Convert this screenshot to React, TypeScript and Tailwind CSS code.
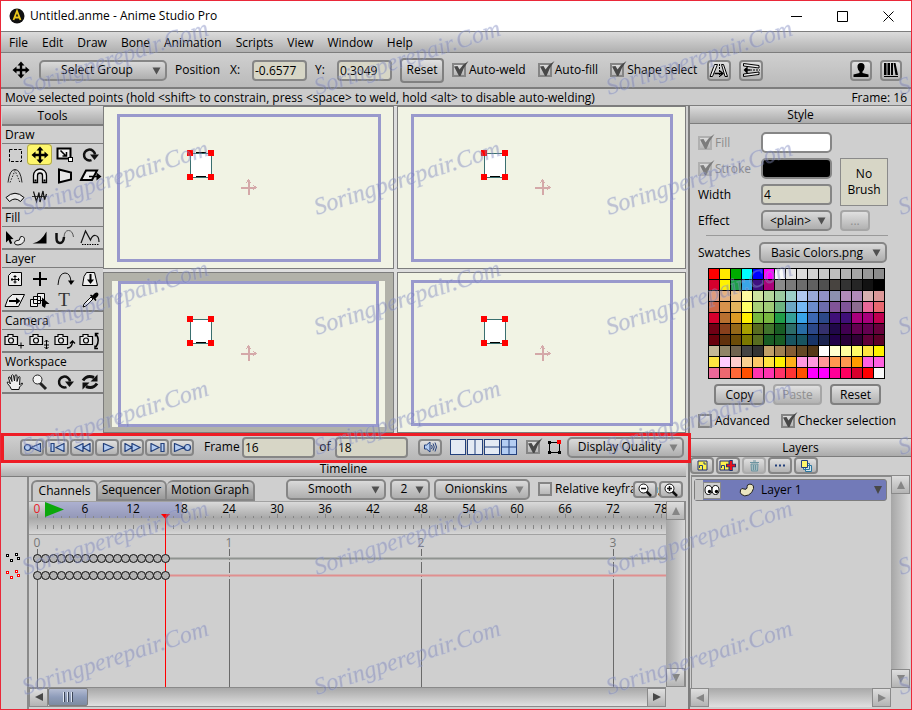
import React from "react";

/* ---------- shared controls ---------- */

type SelectProps = { label: string; value: string; className: string; dim?: boolean };

function Select({ label, value, className, dim }: SelectProps) {
  return (
    <div className={`relative shrink-0 ${className}`}>
      <select
        aria-label={label}
        className="h-[21px] w-full appearance-none rounded-[5px] border-2 border-[#868686] bg-linear-to-b from-[#dadada] to-[#aeaeae] pr-4 pl-1 text-center leading-4 outline-none"
      >
        <option>{value}</option>
      </select>
      <svg className="pointer-events-none absolute top-[7px] right-[6px]" width="9" height="8" viewBox="0 0 9 8">
        <path d="M0.5 0.5h8L4.5 7.5z" fill={dim ? "#808080" : "#505050"} />
      </svg>
    </div>
  );
}

type CheckProps = { label: string; checked?: boolean; hideLabel?: boolean; disabled?: boolean };

function Check({ label, checked, hideLabel, disabled }: CheckProps) {
  return (
    <label className={`relative flex shrink-0 items-center gap-[3px] whitespace-nowrap ${disabled ? "text-[#8c8c8c]" : ""}`}>
      <input
        type="checkbox"
        aria-label={label}
        defaultChecked={checked}
        disabled={disabled}
        className="peer size-[14px] shrink-0 appearance-none border-2 border-[#858585] bg-linear-to-b from-[#dcdcdc] to-[#b8b8b8] disabled:border-[#b0b0b0]"
      />
      <svg className="pointer-events-none invisible absolute left-0 -mt-[2px] peer-checked:visible" width="18" height="18" viewBox="0 0 18 18">
        <path d="M2 6.500L5.500 6l2 3.500Q11 4 16.500 1 11 8 8.500 16H7z" fill={disabled ? "#7c7c7c" : "#484848"} />
      </svg>
      {!hideLabel && <span>{label}</span>}
    </label>
  );
}

function Field({ label, value, className }: { label: string; value: string; className: string }) {
  return (
    <input
      aria-label={label}
      defaultValue={value}
      className={`h-[21px] shrink-0 rounded-[4px] border-2 border-[#868686] bg-[#d7d6c6] px-px leading-4 outline-none ${className}`}
    />
  );
}

function TextButton({ children, className, disabled }: { children: string; className: string; disabled?: boolean }) {
  return (
    <button
      disabled={disabled}
      className={`shrink-0 rounded-[4px] border-2 border-[#808080] bg-linear-to-b from-[#e0e0e0] to-[#b2b2b2] text-center leading-4 disabled:border-[#a6a6a6] disabled:text-[#8f8f8f] ${className}`}
    >
      {children}
    </button>
  );
}

function IconButton({ label, className, children, disabled }: { label: string; className: string; children: React.ReactNode; disabled?: boolean }) {
  return (
    <button
      aria-label={label}
      disabled={disabled}
      className={`flex shrink-0 items-center justify-center rounded-[4px] border-2 border-[#868686] bg-linear-to-b from-[#e0e0e0] to-[#b4b4b4] disabled:border-[#ababab] ${className}`}
    >
      {children}
    </button>
  );
}

function PanelHeader({ children }: { children: string }) {
  return (
    <h2 className="h-[18px] shrink-0 border-b border-[#7d7d7d] bg-linear-to-b from-[#dcdcdc] to-[#aaaaaa] text-center leading-[18px]">{children}</h2>
  );
}

/* ---------- tool palette ---------- */

const MovePath = "M12 1.500l3.500 4H13.200V8.800h3.300V6.500l4 3.500-4 3.500v-2.300h-3.300v3.300h2.300L12 18.500l-3.500-4h2.300v-3.300H7.500v2.300L3.500 10l4-3.500v2.300h3.300V5.500H8.500z";
const Camera = (
  <>
    <path d="M2 5.500h3v-2h5v2h4.500v8H2z" fill="#e6e6e6" stroke="#000" strokeWidth="1.200" />
    <circle cx="8" cy="9.500" r="2.500" fill="#eee" stroke="#000" strokeWidth="1.200" />
  </>
);
const RotateIcon = (
  <>
    <path d="M13.500 15.200A5.500 5.500 0 1 1 17 9.500" fill="none" stroke="#111" strokeWidth="2.500" />
    <path d="M12 9.500h9L16.500 15z" fill="#111" />
  </>
);

const glyphs: Record<string, React.ReactNode> = {
  "Select points": <rect x="6.500" y="4.500" width="12" height="12" fill="none" stroke="#000" strokeDasharray="3 1.500" />,
  "Translate points": <path d={MovePath} fill="#000" />,
  "Scale points": (
    <>
      <rect x="4.500" y="3.500" width="13" height="10" fill="#eee" stroke="#000" strokeWidth="2" />
      <path d="M7.500 5.500l5 5M13.500 7v4h-4" fill="none" stroke="#000" strokeWidth="1.500" />
      <rect x="15.500" y="12.500" width="4" height="4" fill="#fff" stroke="#000" />
    </>
  ),
  "Rotate points": RotateIcon,
  Curvature: (
    <>
      <path d="M5 16.500Q6.500 3.500 12 3.500T19 16.500" fill="none" stroke="#222" />
      <path d="M7 16.500L12 4.500l5 12" fill="none" stroke="#222" strokeDasharray="1.500 1.500" />
    </>
  ),
  Magnet: (
    <>
      <path d="M5.500 16.500V9.500a6.500 6.500 0 0 1 13 0v7h-4v-7a2.500 2.500 0 0 0-5 0v7z" fill="#eee" stroke="#000" strokeWidth="1.300" />
      <path d="M6.500 13.500h2v2h-2zM15.500 13.500h2v2h-2z" fill="#000" />
    </>
  ),
  "Perspective points": <path d="M6 3.500l12 3v7l-12 3z" fill="#e8e8e8" stroke="#000" strokeWidth="2" />,
  "Shear points": (
    <>
      <path d="M8 4.500h11l-5 9.500H3z" fill="#eee" stroke="#000" strokeWidth="2" />
      <path d="M11 10.500h9" stroke="#000" strokeWidth="1.500" />
      <path d="M18.500 6.500l5 4-5 4z" fill="#000" />
    </>
  ),
  "Bend points": <path d="M3 10.500Q12 2 21 10.500l-3.500 4Q12 9.500 6.500 14.500z" fill="#e8e8e8" stroke="#000" />,
  Noise: (
    <>
      <path d="M4 9.500h15" stroke="#333" />
      <path d="M5.500 4.500l3 10 2.500-9 1 9.500 3-11 1.500 9 2-6" fill="none" stroke="#111" strokeWidth="1.200" />
    </>
  ),
  "Select shape": (
    <>
      <path d="M3 3l7.500 8-3 .3 1.700 4-2 .8-1.700-4L3 14.500z" fill="#000" />
      <path d="M14 12.500q3 .5 3-2.500 0-2 2.500-1.500 3 1 1.500 5-2 3.500-6 3.500-3.500 0-3.500-2 0-2 2.500-2.500z" fill="#e8e8e8" stroke="#111" />
    </>
  ),
  "Line width": <path d="M4.500 15.500Q13 14 18.500 3.500v12z" fill="#000" />,
  "Hide edge": (
    <>
      <path d="M3.500 5v5q0 5 3.500 5t4-6" fill="none" stroke="#111" strokeWidth="2.500" />
      <path d="M11 9q.5-6.500 4.500-6.500T20.500 9" fill="none" stroke="#555" />
    </>
  ),
  "Curve exposure": (
    <>
      <path d="M3 15l4.500-12 5 9q2-5 5-4.500 3.500.5 3.500 6.500" fill="none" stroke="#111" strokeWidth="1.200" />
      <path d="M4 16.500h17" stroke="#000" strokeDasharray="1.500 1" />
    </>
  ),
  "Transform layer": (
    <>
      <path d="M8.500 3.500h10v13h-13v-10z" fill="#eee" stroke="#000" />
      <path d="M12 6v8.500M8 10.500h8.500M10.500 7.500h3M10.500 13h3M9 9v3M15.500 9v3" fill="none" stroke="#000" />
    </>
  ),
  "Set origin": <path d="M11 3h2v6h6v2h-6v6h-2v-6H5V9h6z" fill="#000" />,
  "Follow path": (
    <>
      <path d="M5 16q1-12 7-12 5.500 0 6 9" fill="none" stroke="#111" />
      <path d="M15 11.500h6.500L18 16z" fill="#000" />
    </>
  ),
  "Rotate layer": (
    <>
      <path d="M8.500 3.500h8l3 13H4.500l1.500-9z" fill="#eee" stroke="#000" />
      <path d="M12.500 5v6" stroke="#000" strokeWidth="2" />
      <path d="M9 10.500h7l-3.500 4.500z" fill="#000" />
    </>
  ),
  "Shear layer": (
    <>
      <path d="M9.500 4.500h12l-6 12H2l3-8z" fill="#eee" stroke="#000" />
      <path d="M6 11h8" stroke="#000" strokeWidth="2" />
      <path d="M13 7.500l4.500 3.500-4.500 3.500z" fill="#000" />
    </>
  ),
  "Select layer": (
    <>
      <path d="M2.500 9.500h7v7h-7zM5.500 6.500h7v7h-7zM9.500 3.500h7v7h-7z" fill="#eee" stroke="#000" />
      <path d="M14 7.500l7.500 6.500h-3.500l-1 4-3-2z" fill="#000" />
    </>
  ),
  "Insert text": (
    <text x="11" y="16" textAnchor="middle" fontSize="19" fontFamily="Liberation Serif, serif" fill="#333">T</text>
  ),
  Eyedropper: (
    <>
      <path d="M5 17l1-3 7-7 2 2-7 7z" fill="#eee" stroke="#000" />
      <path d="M12 5.500l1-1 1.500 1 2.500-2.500q2-1 3 0t0 3l-2.500 2.500 1 1.500-1 1z" fill="#000" />
    </>
  ),
  "Track camera": <>{Camera}<path d="M15 14.500h6M18 11.500v6" stroke="#000" /></>,
  "Zoom camera": <>{Camera}<path d="M18.500 9v9M16.500 11l2-2 2 2M16 14h5M16.500 16l2 2 2-2" fill="none" stroke="#000" /></>,
  "Roll camera": <>{Camera}<path d="M14 17q5 0 5.500-6M17 12.500l2.500-2.500 2.500 2.500" fill="none" stroke="#000" strokeWidth="1.300" /></>,
  "Pan camera": <>{Camera}<path d="M18 3q4.500 6 0 13M17.500 5.500V2.500h3M20 17.500h-3v-3" fill="none" stroke="#000" strokeWidth="1.500" /></>,
  "Pan workspace": (
    <path d="M8.500 17.500Q7 14 4.500 11.500q-1-2 1-1.500l2 2L5.500 6q0-1.500 1.500-1l2 4.500L8.500 3.500q1-1.500 2 0l1 5.500.5-5.500q1-1.500 2 0v6l1.500-4.500q1.500-1 1.500.5l-.5 7.500 1.500-1.500q2-1 1.500.5L16.500 15l-.5 2.500z" fill="#eee" stroke="#111" />
  ),
  "Zoom workspace": (
    <>
      <path d="M12 11l6 6" stroke="#222" strokeWidth="3" />
      <circle cx="9.500" cy="7.500" r="4.500" fill="#f4f4f4" stroke="#222" />
    </>
  ),
  "Rotate workspace": RotateIcon,
  "Orbit workspace": (
    <>
      <path d="M5 8.500Q9 2.500 16 5.500M19 11.500Q15 17.500 8 14.500" fill="none" stroke="#111" strokeWidth="3" />
      <path d="M19.500 2.500v7h-7zM4.500 17.500v-7h7z" fill="#111" />
    </>
  ),
};

const toolSections = [
  { title: "Draw", tools: ["Select points", "Translate points", "Scale points", "Rotate points", "Curvature", "Magnet", "Perspective points", "Shear points", "Bend points", "Noise"] },
  { title: "Fill", tools: ["Select shape", "Line width", "Hide edge", "Curve exposure"] },
  { title: "Layer", tools: ["Transform layer", "Set origin", "Follow path", "Rotate layer", "Shear layer", "Select layer", "Insert text", "Eyedropper"] },
  { title: "Camera", tools: ["Track camera", "Zoom camera", "Roll camera", "Pan camera"] },
  { title: "Workspace", tools: ["Pan workspace", "Zoom workspace", "Rotate workspace", "Orbit workspace"] },
];

function ToolPalette() {
  return (
    <aside className="flex w-[102px] shrink-0 flex-col pl-px">
      <h2 className="h-[20px] border-b-2 border-[#7d7d7d] bg-linear-to-b from-[#dcdcdc] to-[#aaaaaa] text-center leading-[19px]">Tools</h2>
      {toolSections.map((s) => (
        <section key={s.title} className="border-b-2 border-[#7d7d7d]">
          <h3 className="h-[18px] border-b border-[#7d7d7d] pl-[3px] leading-[17px]">{s.title}</h3>
          <div className="grid grid-cols-4 pr-px">
            {s.tools.map((t) => (
              <button
                key={t}
                aria-label={t}
                className={`flex h-[21px] items-center justify-center rounded-[4px] ${t === "Translate points" ? "bg-[#fdf66c] inset-ring inset-ring-[#b0a94a]" : ""}`}
              >
                <svg width="24" height="20" viewBox="0 0 24 20" className="shrink-0">{glyphs[t]}</svg>
              </button>
            ))}
          </div>
        </section>
      ))}
    </aside>
  );
}

/* ---------- viewports ---------- */

function Shape({ topEdge }: { topEdge?: boolean }) {
  const corners = [[86, 46], [107, 46], [86, 70], [107, 70]];
  return (
    <svg className="absolute inset-0 size-full" shapeRendering="crispEdges">
      <rect x="86.500" y="46.500" width="21" height="24" fill="#fff" stroke="#3a6f6f" />
      <path d="M92 69.500h10" stroke="#000" />
      {topEdge && <path d="M92 45.500h10" stroke="#000" />}
      {corners.map(([x, y]) => (
        <rect key={`${x}-${y}`} x={x - 3} y={y - 3} width="6" height="6" fill="#f00" />
      ))}
      <path d="M137 80.500h15M144.500 73v15" stroke="#d4a8a8" strokeWidth="2" />
      <path d="M149 78l3 2.500-3 2.500M142 76l2.500-3 2.500 3" fill="none" stroke="#d6acac" />
    </svg>
  );
}

function Viewport({ topEdge }: { topEdge?: boolean }) {
  return (
    <div className="relative flex border border-[#7d7d7d] bg-[#f1f3e4] pt-[7px] pr-3 pb-[6px] pl-[13px]">
      <div className="flex-1 border-[3px] border-[#9999cc]" />
      <Shape topEdge={topEdge} />
    </div>
  );
}

function ActiveViewport() {
  return (
    <div className="relative flex border border-[#7d7d7d] bg-[#b2b2a9] px-2 pt-2 pb-[5px]">
      <div className="flex flex-1 bg-[#f1f3e4] px-[6px]">
        <div className="flex-1 border-[3px] border-[#9999cc]" />
      </div>
      <Shape />
    </div>
  );
}

/* ---------- playback ---------- */

const transport: [string, string][] = [
  ["Rewind", "M7.500 4.500a3 3 0 1 1-6 0 3 3 0 1 1 6 0zM17.500 .5v8L8 4.500z"],
  ["Previous keyframe", "M3 .5h3v8H3zM16 .5v8L8 4.500z"],
  ["Step back", "M10 .5v8L2 4.500zM17 .5v8L10 4.500z"],
  ["Play", "M5.500 .5v8L15 4.500z"],
  ["Step forward", "M2 .5v8l7-4zM9 .5v8l8-4z"],
  ["Next keyframe", "M3 .5v8l8-4zM13 .5h3v8h-3z"],
  ["Jump to end", "M1.500 .5v8L11 4.500zM17.500 4.500a3 3 0 1 1-6 0 3 3 0 1 1 6 0z"],
];

const layouts: [string, string][] = [
  ["One view", ""],
  ["Two columns", "M7.500 0v15"],
  ["Two rows", "M0 7.500h15"],
  ["Four views", "M7.500 0v15M0 7.500h15"],
];

function PlaybackBar() {
  return (
    <div className="relative flex h-[30px] shrink-0 items-center bg-linear-to-b from-[#d2d2d2] to-[#b4b4b4] pr-1 pb-[2px] pl-[19px]">
      <div className="flex gap-px">
        {transport.map(([label, d]) => (
          <IconButton key={label} label={label} className="h-[17px] w-6">
            <svg width="19" height="9" viewBox="0 0 19 9" className="shrink-0">
              <path d={d} fill="#b4cdf2" stroke="#23407c" strokeWidth="1.200" />
            </svg>
          </IconButton>
        ))}
      </div>
      <span className="w-12 pl-[10px]">Frame</span>
      <Field label="Current frame" value="16" className="w-[73px]" />
      <span className="w-5 text-center">of</span>
      <Field label="Total frames" value="18" className="w-[73px]" />
      <IconButton label="Audio" className="ml-[10px] h-[17px] w-6">
        <svg width="15" height="12" viewBox="0 0 15 12">
          <path d="M1.500 4h2L7 1v10L3.500 8h-2z" fill="#b4cdf2" stroke="#23407c" />
          <path d="M8.500 4q1.500 2 0 4M10 2.500q2.500 3.500 0 7M12 1.500q3 4.500 0 9" fill="none" stroke="#23407c" />
        </svg>
      </IconButton>
      <div className="ml-2 flex gap-px">
        {layouts.map(([label, d], i) => (
          <button key={label} aria-label={label}>
            <svg width="16" height="16" viewBox="-0.500 -0.500 16 16" className="block">
              <rect x="0" y="0" width="15" height="15" fill={i === 3 ? "#b4cdf2" : "#e4eaf4"} stroke="#23407c" />
              <path d={d} stroke="#23407c" />
            </svg>
          </button>
        ))}
      </div>
      <div className="ml-[9px]">
        <Check label="Show path" checked hideLabel />
      </div>
      <svg width="15" height="15" viewBox="0 0 15 15" className="ml-[7px] shrink-0" shapeRendering="crispEdges">
        <path d="M2.500 2.500h10v10h-10z" fill="none" stroke="#000" />
        <path d="M1 1h3v3H1zM1 11h3v3H1zM11 11h3v3h-3z" fill="#000" />
        <path d="M10 0h4v4h-4z" fill="#f00" />
      </svg>
      <div className="ml-auto">
        <Select label="Display quality" value="Display Quality" className="w-[117px]" dim />
      </div>
      <div className="pointer-events-none absolute inset-y-0 left-0 -right-[3px] z-10 border-[3px] border-[#ee1c25]" />
    </div>
  );
}

/* ---------- timeline ---------- */

const FRAME = 8;
const ORIGIN = 8;
const tickFrames = Array.from({ length: 80 }, (_, i) => i);
const labelFrames = Array.from({ length: 14 }, (_, i) => i * 6);
const seconds = [0, 1, 2, 3];
const keys = Array.from({ length: 17 }, (_, i) => i);

function TimelineChart() {
  return (
    <div className="relative min-w-0 flex-1 overflow-hidden">
      <div className="h-[34px] border-y border-[#a2a2a2] bg-linear-to-b from-[#dadada] via-[#a8a8a8] to-[#d6d6d6]" />
      <svg className="absolute inset-0 size-full">
        <rect x="16" y="1" width="137" height="16" fill="#8088c8" opacity="0.500" />
        {tickFrames.map((f) => (
          <path key={f} d={`M${ORIGIN + f * FRAME + 0.5} ${f % 6 ? 15 : 13}v${f % 6 ? 2 : 4}m0 7v4`} stroke="#858585" />
        ))}
        {labelFrames.map((f) => (
          <text key={f} x={ORIGIN + f * FRAME} y="12" textAnchor="middle" fontSize="12" fill={f === 0 ? "#e8202a" : "#000"}>{f}</text>
        ))}
        <path d="M16 1l19 7.500L16 16z" fill="#0ca80c" />
        {seconds.map((s) => (
          <g key={s} shapeRendering="crispEdges">
            <text x={ORIGIN + s * 192} y="46" textAnchor="middle" fontSize="12" fill="#777">{s}</text>
            <line x1={ORIGIN + s * 192 + 0.5} x2={ORIGIN + s * 192 + 0.5} y1="48" y2="100%" stroke="#6a6a6a" />
            <path d={`M${ORIGIN + s * 192} 55.500h2m-2 4h2m-2 13h2m-2 4h2`} stroke="#cfcfcf" strokeWidth="2" />
          </g>
        ))}
        <path d="M9 57.500h2000" stroke="#8f9390" strokeWidth="2" />
        <path d="M9 74.500h2000" stroke="#e08f8f" strokeWidth="2" />
        <line x1="136.500" x2="136.500" y1="14" y2="100%" stroke="#f00" />
        <path d="M132 13h9l-4.500 5z" fill="#f00" />
        {[57.5, 74.5].map((y) =>
          keys.map((k) => <circle key={`${y}-${k}`} cx={ORIGIN + 0.5 + k * FRAME} cy={y} r="4" fill="#b4b4b4" stroke="#111" />)
        )}
      </svg>
    </div>
  );
}

function ScrollArrow({ label, d, dim }: { label: string; d: string; dim?: boolean }) {
  return (
    <button aria-label={label} className="flex size-[19px] shrink-0 items-center justify-center border border-[#8a8a8a] bg-linear-to-b from-[#dedede] to-[#b4b4b4]">
      <svg width="8" height="8" viewBox="0 0 8 8">
        <path d={d} fill={dim ? "#858585" : "#484848"} />
      </svg>
    </button>
  );
}

const UP = "M0 8h8L4 0z";
const DOWN = "M0 0h8L4 8z";
const LEFT = "M8 0v8L0 4z";
const RIGHT = "M0 0v8l8-4z";

function KeyIcon({ color }: { color: string }) {
  return (
    <svg width="16" height="9" viewBox="0 0 16 9" shapeRendering="crispEdges">
      <path d="M.5 1.500h2v2h-2zM9.500.5h2v2h-2zM4.500 6.500h2v2h-2zM11.500 4.500h2v2h-2z" fill="#fff" stroke={color} />
    </svg>
  );
}

function ZoomButton({ label, plus }: { label: string; plus?: boolean }) {
  return (
    <IconButton label={label} className="h-[17px] w-6">
      <svg width="16" height="14" viewBox="0 0 16 14">
        <path d="M9 8l5 5" stroke="#111" strokeWidth="2.500" />
        <circle cx="6.500" cy="5.500" r="4.500" fill="#fff" stroke="#111" />
        <path d={plus ? "M4 5.500h5M6.500 3v5" : "M4 5.500h5"} stroke="#111" strokeWidth="1.500" />
      </svg>
    </IconButton>
  );
}

function Timeline() {
  return (
    <section className="flex min-h-0 flex-1 flex-col pr-[2px]">
      <h2 className="h-[14px] shrink-0 border-b border-[#7d7d7d] bg-linear-to-b from-[#dcdcdc] to-[#b0b0b0] text-center leading-3">Timeline</h2>
      <div className="flex min-h-0 flex-1">
        <div className="flex w-[27px] shrink-0 flex-col gap-2 border-r border-[#8a8a8a] pt-[76px] pl-[5px]">
          <KeyIcon color="#000" />
          <KeyIcon color="#f00" />
        </div>
        <div className="flex min-w-0 flex-1 flex-col border-l border-[#8a8a8a]">
          <div className="relative flex h-6 shrink-0 items-center pl-[2px]">
            <div role="tablist" className="flex self-end">
              <button role="tab" aria-selected="true" className="h-[21px] w-[67px] rounded-t-[6px] border-2 border-b-0 border-[#868686] bg-[#cbcbcb] pb-px leading-4">Channels</button>
              <button role="tab" aria-selected="false" className="h-[21px] w-[69px] rounded-t-[6px] border-2 border-l-0 border-[#868686] bg-linear-to-b from-[#c8c8c8] to-[#999999] pb-[2px] leading-4">Sequencer</button>
              <button role="tab" aria-selected="false" className="h-[21px] w-[88px] rounded-t-[6px] border-2 border-l-0 border-[#868686] bg-linear-to-b from-[#c8c8c8] to-[#999999] pb-[2px] leading-4 whitespace-nowrap">Motion Graph</button>
            </div>
            <div className="ml-[31px] flex items-center gap-1">
              <Select label="Interpolation" value="Smooth" className="w-[100px]" />
              <Select label="Interval" value="2" className="w-10" />
              <Select label="Onionskins" value="Onionskins" className="w-24" dim />
            </div>
            <div className="ml-2 flex">
              <Check label="Relative keyframing" />
            </div>
            <div className="absolute top-1 right-[3px] flex gap-[2px]">
              <ZoomButton label="Zoom out" />
              <ZoomButton label="Zoom in" plus />
            </div>
          </div>
          <div className="flex min-h-0 flex-1">
            <TimelineChart />
            <div className="flex w-5 shrink-0 flex-col justify-between border-r border-[#8a8a8a] bg-linear-to-r from-[#a6a6a6] to-[#d8d8d8]">
              <ScrollArrow label="Scroll up" d={UP} dim />
              <ScrollArrow label="Scroll down" d={DOWN} dim />
            </div>
          </div>
          <div className="mr-5 mb-[2px] flex h-5 shrink-0 items-center border-y border-[#8a8a8a] bg-linear-to-b from-[#a8a8a8] to-[#e0e0e0]">
            <ScrollArrow label="Scroll left" d={LEFT} />
            <div className="flex h-[18px] w-10 items-center justify-center gap-[2px] rounded-[2px] border border-[#7d7d7d] bg-linear-to-b from-[#b4bcd2] via-[#8e9cba] to-[#7d8ba0]">
              <span className="h-[10px] w-[2px] border-r border-[#3c4658] bg-[#dfe6f2]" />
              <span className="h-[10px] w-[2px] border-r border-[#3c4658] bg-[#dfe6f2]" />
              <span className="h-[10px] w-[2px] border-r border-[#3c4658] bg-[#dfe6f2]" />
            </div>
            <div className="flex-1" />
            <ScrollArrow label="Scroll right" d={RIGHT} />
          </div>
        </div>
      </div>
    </section>
  );
}

/* ---------- style panel ---------- */

const palette = [
  "f00 ffe900 00ab00 0ff 00f f0f fafafa e6e6e6 dcdcdc d2d2d2 c8c8c8 bebebe b2b2b2 a5a5a5 989898 8c8c8c",
  "d4002d fff200 1f9e4a 3aa5e6 3f1080 a90078 8a8a8a 7a7a7a 6c6c6c 606060 505050 484440 333 262626 121212 000",
  "dd9c80 e5b080 f0c78c fffaa0 cfe3a0 b4d69c 9ccba0 9ccfc8 b0c8f0 98a8d8 9090c4 8c90b0 b08ab8 b08ab8 d8b0b0 dc9898",
  "cf6848 d8924c e2b25c ffff66 a8d078 a0cc78 6cb480 6ca8c4 74b8f4 6c8ccc 6c6cac 805498 805498 8c6c90 e86898 e86870",
  "d4002d b87030 dc9a24 fff000 78b840 78b840 209c48 34a098 38a4e8 3c68b4 2c4888 3f1078 3f1078 a8007c a8007c c00050",
  "700014 88401c 946818 a8a000 586c20 40742c 185c24 2c6c68 286ca4 2c4888 34306c 200848 400050 640050 640050 68003c",
  "68000c 60300c 6c4c08 7c7800 586c20 185c24 185c24 185460 185460 183468 1c2450 200048 280038 300034 600038 5c0028",
  "c4b898 908468 706450 444 333 c0a068 a08050 845c34 644824 543818 fff ffffd0 ffffa0 fffc68 ffe440 fff000",
  "ffe440 ffccff ffcccc f8d090 fcc868 ffe440 fff000 ffb018 ff98e0 ff98e0 ff9898 ff9850 ff9850 ff9c00 ff60e0 ff60e0",
  "ec6898 ec6870 ff6838 ff5000 ff34b0 ff34b0 ff3468 ff3434 ff5000 f0f f0f ff0098 ff0060 d8002c f00 f8f8f8",
].flatMap((row) => row.split(" "));

function StylePanel() {
  return (
    <section className="shrink-0">
      <PanelHeader>Style</PanelHeader>
      <div className="px-2 pt-2 pb-[10px]">
        <div className="flex items-end gap-2">
          <div className="grid grid-cols-[63px_71px] items-center gap-y-[5px]">
            <Check label="Fill" checked disabled />
            <button aria-label="Fill colour" className="h-[21px] rounded-[5px] border-2 border-[#868686] bg-white" />
            <Check label="Stroke" checked disabled />
            <button aria-label="Stroke colour" className="h-[21px] rounded-[5px] border-2 border-[#868686] bg-black" />
            <span>Width</span>
            <Field label="Width" value="4" className="w-full" />
            <span>Effect</span>
            <Select label="Effect" value="<plain>" className="w-full" />
          </div>
          <div className="flex flex-col gap-1">
            <button className="h-12 w-12 border border-[#8a8a8a] bg-[#d7d6c6] leading-4">No<br />Brush</button>
            <TextButton className="h-[21px] w-[30px]" disabled>...</TextButton>
          </div>
        </div>
        <div className="mt-1 ml-2 mr-[15px] border-t border-[#9a9a9a]" />
        <div className="mt-[6px] flex items-center">
          <span className="w-[61px]">Swatches</span>
          <Select label="Swatches" value="Basic Colors.png" className="w-[128px]" />
        </div>
        <div className="mt-[5px] ml-[10px] grid w-[177px] grid-cols-[repeat(16,10px)] gap-px border border-black bg-black">
          {palette.map((c, i) => (
            <button key={i} aria-label={`Swatch ${c}`} className="h-[10px]" style={{ background: `#${c}` }} />
          ))}
        </div>
        <div className="mt-[5px] ml-4 flex gap-2">
          <TextButton className="h-[21px] w-[51px]">Copy</TextButton>
          <TextButton className="h-[21px] w-[49px]" disabled>Paste</TextButton>
          <TextButton className="h-[21px] w-[51px]">Reset</TextButton>
        </div>
        <div className="mt-2 flex h-[15px] items-center gap-[11px]">
          <Check label="Advanced" />
          <Check label="Checker selection" checked />
        </div>
      </div>
    </section>
  );
}

/* ---------- layers panel ---------- */

function LayersPanel() {
  return (
    <section className="flex min-h-0 flex-1 flex-col border-t border-[#7d7d7d]">
      <PanelHeader>Layers</PanelHeader>
      <div className="flex h-[17px] shrink-0 gap-[2px]">
        <IconButton label="New layer" className="h-[17px] w-6">
          <svg width="11" height="11" viewBox="0 0 11 11"><path d="M1 1h9v9H1z" fill="#fdf14c" stroke="#23306c" /><path d="M2.500 8V5.500h3V10M6 3h2v2" fill="none" stroke="#23407c" /></svg>
        </IconButton>
        <IconButton label="Duplicate layer" className="h-[17px] w-6">
          <svg width="18" height="11" viewBox="0 0 18 11"><path d="M1 1h9v9H1z" fill="#fdf14c" stroke="#23306c" /><path d="M2.500 8V5.500h3V10" fill="none" stroke="#23407c" /><path d="M12 0v11M7 5.500h10" stroke="#23306c" strokeWidth="3.500" /><path d="M12 1v9M8 5.500h8" stroke="#e8101c" strokeWidth="2" /></svg>
        </IconButton>
        <IconButton label="Delete layer" className="h-[17px] w-6" disabled>
          <svg width="11" height="12" viewBox="0 0 11 12"><path d="M1 2.500h9M4 1h3M2 4h7l-.5 7h-6zM4.500 5v5M6.500 5v5" fill="#a4bcc0" stroke="#6c94a0" /></svg>
        </IconButton>
        <IconButton label="Layer options" className="h-[17px] w-6">
          <svg width="12" height="3" viewBox="0 0 12 3"><path d="M1 .5h2v2H1zM5 .5h2v2H5zM9 .5h2v2H9z" fill="#23407c" /></svg>
        </IconButton>
        <IconButton label="Group layers" className="h-[17px] w-6">
          <svg width="13" height="12" viewBox="0 0 13 12"><path d="M5.500 5.500h6v6h-6zM3.500 3.500h6v6h-6z" fill="#d4e4ec" stroke="#2c78a0" /><path d="M1.500.5h6v7h-6z" fill="#fdf66c" stroke="#23407c" /></svg>
        </IconButton>
      </div>
      <div className="mr-px mt-px flex min-h-0 flex-1">
        <div className="ml-px min-w-0 flex-1 border-t-2 border-l border-[#8a8a8a] px-[2px] pt-[2px]">
          <div className="mr-[2px] flex h-[22px] items-center rounded-[3px] border border-[#7d7d7d] bg-[#727ab8]">
            <span className="h-full w-2 bg-[#c4c4c4]" />
            <button aria-label="Visibility" className="h-[17px] w-[18px] border border-[#8a8a8a] bg-[#d0d0d0]">
              <svg width="16" height="15" viewBox="0 0 16 15" className="block">
                <ellipse cx="4.500" cy="7" rx="3.500" ry="4.500" fill="#fff" stroke="#111" />
                <ellipse cx="11.500" cy="7" rx="3.500" ry="4.500" fill="#fff" stroke="#111" />
                <circle cx="5.500" cy="8.500" r="1.700" fill="#000" /><circle cx="12.500" cy="8.500" r="1.700" fill="#000" />
              </svg>
            </button>
            <svg width="16" height="14" viewBox="0 0 16 14" className="ml-[18px]">
              <path d="M8.500 2Q11 .5 13 1.500t1.500 4Q13.500 10 9.500 12t-7-.5Q.5 9.500 1.500 7T5 6q2.500 1 3-1 0-1.500.5-3z" fill="#ebe6c0" stroke="#222" />
            </svg>
            <span className="ml-[6px]">Layer 1</span>
            <svg width="8" height="8" viewBox="0 0 8 8" className="mr-1 ml-auto"><path d={DOWN} fill="#484848" /></svg>
          </div>
        </div>
        <div className="flex w-[19px] shrink-0 flex-col justify-between bg-linear-to-r from-[#a6a6a6] to-[#d8d8d8]">
          <ScrollArrow label="Layers scroll up" d={UP} dim />
          <ScrollArrow label="Layers scroll down" d={DOWN} dim />
        </div>
      </div>
      <div className="mr-5 mb-[2px] flex h-[19px] shrink-0 justify-between bg-linear-to-b from-[#a8a8a8] to-[#e0e0e0]">
        <ScrollArrow label="Layers scroll left" d={LEFT} dim />
        <ScrollArrow label="Layers scroll right" d={RIGHT} dim />
      </div>
    </section>
  );
}

/* ---------- window chrome ---------- */

function TitleBar() {
  return (
    <header className="flex h-[30px] shrink-0 items-center bg-white pl-2">
      <svg width="16" height="16" viewBox="0 0 16 16">
        <circle cx="8" cy="8" r="7.500" fill="#111" />
        <path d="M4.500 12L8 3l3.500 9M5.500 9.500h5" fill="none" stroke="#ecc81c" strokeWidth="1.800" />
      </svg>
      <h1 className="ml-[5px] leading-4">Untitled.anme - Anime Studio Pro</h1>
      <div className="ml-auto flex">
        <button aria-label="Minimize" className="flex w-[46px] justify-center">
          <svg width="11" height="11" viewBox="0 0 11 11"><path d="M0 5.500h11" stroke="#000" /></svg>
        </button>
        <button aria-label="Maximize" className="flex w-[46px] justify-center">
          <svg width="11" height="11" viewBox="0 0 11 11"><path d="M.5.5h10v10H.5z" fill="none" stroke="#000" /></svg>
        </button>
        <button aria-label="Close" className="flex w-[46px] justify-center">
          <svg width="11" height="11" viewBox="0 0 11 11"><path d="M.5.5l10 10M10.500.5l-10 10" stroke="#000" /></svg>
        </button>
      </div>
    </header>
  );
}

const menus = ["File", "Edit", "Draw", "Bone", "Animation", "Scripts", "View", "Window", "Help"];

function OptionsBar() {
  return (
    <div className="flex h-9 shrink-0 items-center border-b-2 border-[#7d7d7d] bg-linear-to-b from-[#d0d0d0] to-[#bababa] pl-2">
      <svg width="24" height="20" viewBox="0 0 24 20"><path d={MovePath} fill="#000" /></svg>
      <div className="ml-[6px]">
        <Select label="Select group" value="Select Group" className="w-[128px]" />
      </div>
      <span className="ml-2 w-[55px]">Position</span>
      <span className="w-[22px]">X:</span>
      <Field label="X" value="-0.6577" className="w-[55px]" />
      <span className="ml-2 w-[22px]">Y:</span>
      <Field label="Y" value="0.3049" className="w-[55px]" />
      <TextButton className="ml-2 h-[25px] w-11">Reset</TextButton>
      <div className="ml-2 flex gap-3">
        <Check label="Auto-weld" checked />
        <Check label="Auto-fill" checked />
        <Check label="Shape select" checked />
      </div>
      <IconButton label="Flip horizontally" className="ml-[10px] h-[21px] w-6">
        <svg width="20" height="15" viewBox="0 0 20 15">
          <path d="M5.500 1.500h3l-5 12H1zM14.500 1.500h-2l3.500 12h2.500z" fill="#eee" stroke="#000" />
          <path d="M10.500 1v13" stroke="#000" strokeDasharray="2 1" /><path d="M5.500 10.500h8M11 8l3 2.500-3 2.500" fill="none" stroke="#000" strokeWidth="1.300" />
        </svg>
      </IconButton>
      <IconButton label="Flip vertically" className="ml-2 h-[21px] w-6">
        <svg width="19" height="16" viewBox="0 0 19 16">
          <path d="M1.500 1.500l15.500 2v2.500l-15.500-2zM1.500 14.500l15.500-2v-2.500l-15.500 2z" fill="#eee" stroke="#000" />
          <path d="M8 8h10" stroke="#000" strokeDasharray="2 1" /><path d="M8 8H2.500M5 5.500L2.500 8 5 10.500M5 5v6" fill="none" stroke="#000" strokeWidth="1.300" />
        </svg>
      </IconButton>
      <div className="mr-[9px] ml-auto flex gap-2">
        <IconButton label="Character wizard" className="h-[21px] w-[22px]">
          <svg width="18" height="16" viewBox="0 0 18 16"><path d="M9 1q4 0 3.500 4.500-.5 3-2 4v1.500l6 1.500V15h-15v-2.500l6-1.500V9.500q-1.500-1-2-4Q5 1 9 1z" fill="#000" /></svg>
        </IconButton>
        <IconButton label="Library" className="h-[21px] w-[22px]">
          <svg width="16" height="16" viewBox="0 0 16 16"><path d="M1 1h2.500v12H1zM4.500 1H7v12H4.500zM8 1h2v12H8zM10.500 1h2L15 13h-2.500zM1 14h14v1H1z" fill="#000" /></svg>
        </IconButton>
      </div>
    </div>
  );
}

function Watermark() {
  return (
    <svg aria-hidden="true" className="pointer-events-none absolute inset-0 z-20 size-full">
      <defs>
        <pattern id="stamp" x="14" y="8" width="292" height="120" patternUnits="userSpaceOnUse">
          <text x="10" y="86" transform="rotate(-18 10 86)" fontFamily="Liberation Serif, serif" fontStyle="italic" fontSize="24" fill="#6468a8" fillOpacity="0.350" stroke="#a8b8e0" strokeOpacity="0.250" strokeWidth="1">Soringperepair.Com</text>
        </pattern>
      </defs>
      <rect width="100%" height="100%" fill="url(#stamp)" />
    </svg>
  );
}

export default function App() {
  return (
    <div className="relative flex h-screen flex-col overflow-hidden border border-[#ea2839] bg-[#cfcfcf] font-['Open_Sans','Noto_Sans',sans-serif] text-[12px] leading-4 text-black">
      <TitleBar />
      <nav className="flex h-[22px] shrink-0 items-center gap-[14px] border-y border-[#7d7d7d] bg-linear-to-b from-[#dcdcdc] to-[#b0b0b0] pt-px pl-2">
        {menus.map((m) => (
          <button key={m}>{m}</button>
        ))}
      </nav>
      <OptionsBar />
      <div className="flex h-[17px] shrink-0 items-center justify-between border-b border-[#7d7d7d] bg-[#cccccc] pt-px pr-1 pl-1 whitespace-nowrap">
        <span>Move selected points (hold &lt;shift&gt; to constrain, press &lt;space&gt; to weld, hold &lt;alt&gt; to disable auto-welding)</span>
        <span>Frame: 16</span>
      </div>
      <main className="flex min-h-0 flex-1">
        <div className="flex min-w-0 flex-1 flex-col">
          <div className="flex h-[327px] shrink-0">
            <ToolPalette />
            <div className="mr-[2px] grid flex-1 grid-cols-[291fr_289fr] grid-rows-[163fr_161fr] gap-[3px] bg-[#dedede]">
              <Viewport topEdge />
              <Viewport />
              <ActiveViewport />
              <Viewport />
            </div>
          </div>
          <PlaybackBar />
          <Timeline />
        </div>
        <div className="flex w-[223px] shrink-0 flex-col border-l-2 border-[#7d7d7d]">
          <StylePanel />
          <LayersPanel />
        </div>
      </main>
      <Watermark />
    </div>
  );
}
